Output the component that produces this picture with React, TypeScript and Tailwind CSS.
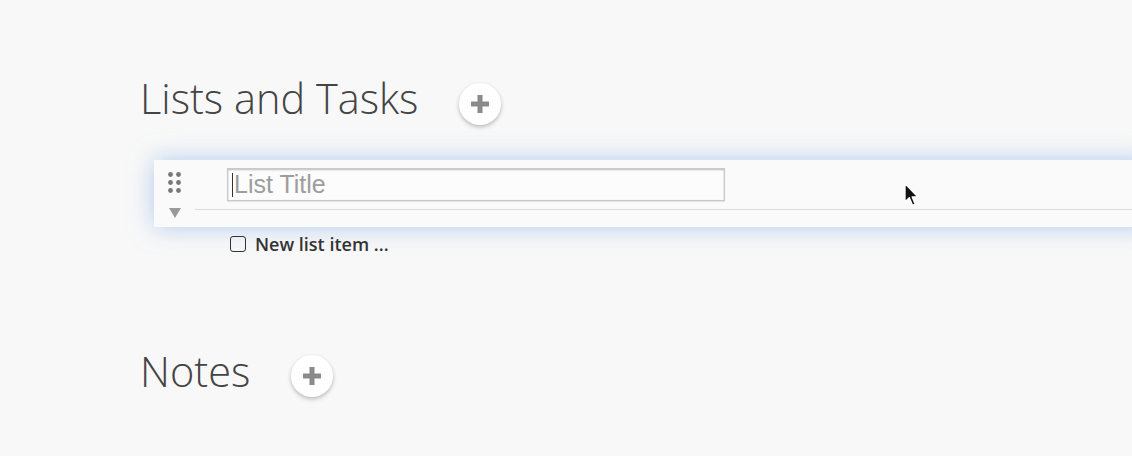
import React from "react";

const PlusButton = ({ className = "" }: { className?: string }) => (
  <button
    className={`flex h-[42px] w-[42px] shrink-0 items-center justify-center rounded-full bg-white shadow-[0_2px_4px_rgba(0,0,0,0.25)] ${className}`}
  >
    <svg width="18" height="18" viewBox="0 0 18 18">
      <rect x="6.5" y="0" width="5" height="18" fill="#8a8a8a" />
      <rect x="0" y="6.5" width="18" height="5" fill="#8a8a8a" />
    </svg>
  </button>
);

const Heading = ({ title, btnTop = "mt-[10px]" }: { title: string; btnTop?: string }) => (
  <div className="flex items-start">
    <h2 className="text-[41.5px] font-light leading-[50px] text-[#444] [font-family:'Open_Sans',sans-serif]">
      {title}
    </h2>
    <PlusButton className={`ml-[41px] ${btnTop}`} />
  </div>
);

const App = () => {
  return (
    <div className="relative h-[456px] w-[1132px] overflow-hidden bg-[#f8f8f8] pl-[140px] pt-[73px] [font-family:'Open_Sans',sans-serif]">
      <Heading title="Lists and Tasks" />

      {/* list card */}
      <div className="ml-[14px] mt-[35px] flex h-[67px] w-[1000px] bg-[#fafafa] shadow-[0_0_24px_rgba(120,168,228,0.55)]">
        <div className="flex w-[41px] flex-col items-center pt-[12px]">
          <svg width="13" height="21" viewBox="0 0 13 21">
            {[2.5, 10.5, 18.5].map((y) => (
              <g key={y}>
                <circle cx="2.5" cy={y} r="2.4" fill="#777" />
                <circle cx="10.5" cy={y} r="2.4" fill="#777" />
              </g>
            ))}
          </svg>
          <svg width="12" height="10" viewBox="0 0 12 10" className="mt-[15px]">
            <polygon points="0,0 12,0 6,10" fill="#9a9a9a" />
          </svg>
        </div>
        <div className="flex-1">
          <div className="h-[50px] border-b border-[#dcdcdc] pl-[32px] pt-[8px]">
            <div className="relative flex h-[33px] w-[498px] items-center border border-[#c8c8c8] bg-[#fcfcfc] pl-[4px] shadow-[inset_0_1px_2px_rgba(0,0,0,0.25),0_1px_1px_rgba(0,0,0,0.08)]">
              <span className="mr-[1px] h-[24px] w-[1px] bg-[#333]" />
              <span className="text-[25px] leading-none text-[#9d9d9d] [font-family:'Liberation_Sans',Arial,sans-serif]">
                List Title
              </span>
            </div>
          </div>
        </div>
      </div>

      {/* new item row */}
      <div className="ml-[90px] mt-[5px] flex h-[24px] items-center gap-[9px]">
        <span className="h-[16px] w-[16px] rounded-[3px] border-[1.5px] border-[#333]" />
        <span className="text-[18px] font-semibold leading-[24px] text-[#333]">New list item ...</span>
      </div>

      <div className="mt-[90px]">
        <Heading title="Notes" btnTop="mt-[9px]" />
      </div>

      {/* mouse cursor */}
      <svg
        width="18"
        height="26"
        viewBox="0 0 16 24"
        className="absolute left-[903px] top-[182px]"
      >
        <path
          d="M1.5 1.5 L1.5 18.5 L5.5 14.5 L8.5 21.5 L11 20.5 L8.2 13.8 L13.5 13.8 Z"
          fill="#111"
          stroke="#fff"
          strokeWidth="1.3"
          strokeLinejoin="round"
        />
      </svg>
    </div>
  );
};

export default App;
